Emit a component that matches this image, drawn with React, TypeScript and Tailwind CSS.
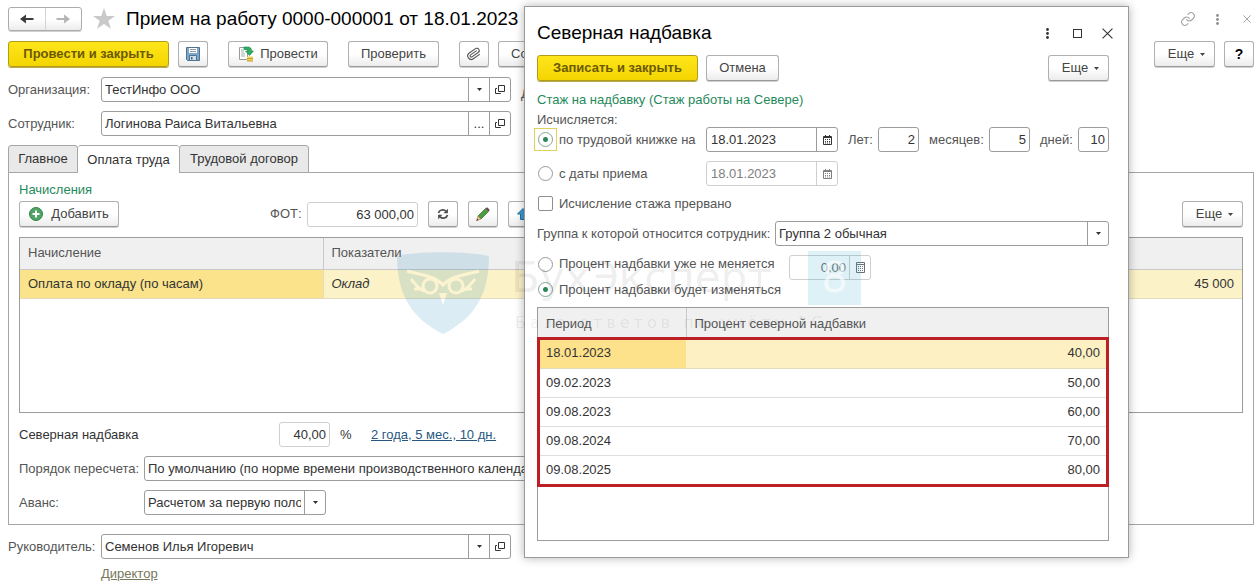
import type { ReactNode } from "react";

const periods = [
  { date: "18.01.2023", percent: "40,00" },
  { date: "09.02.2023", percent: "50,00" },
  { date: "09.08.2023", percent: "60,00" },
  { date: "09.08.2024", percent: "70,00" },
  { date: "09.08.2025", percent: "80,00" },
];

/* ---------- icons ---------- */

function ArrowIcon({ flip = false }: { flip?: boolean }) {
  return (
    <svg className={flip ? "w-4 h-3 rotate-180 text-[#b4b4b4]" : "w-4 h-3 text-[#3a3a3a]"} viewBox="0 0 16 12" aria-hidden="true">
      <path d="M2 6h12.500" stroke="currentColor" strokeWidth={2} fill="none" />
      <path d="M1 6l6-4.500v3L5 6l2 1.500v3z" fill="currentColor" />
    </svg>
  );
}

function StarIcon() {
  return (
    <svg className="w-6 h-6 text-[#c9c9c9]" viewBox="0 0 24 24" fill="currentColor" aria-hidden="true">
      <path d="M12 1l2.700 7.900H23l-6.700 4.900 2.600 8L12 16.900 5.100 21.800l2.600-8L1 8.900h8.300z" />
    </svg>
  );
}

function CaretIcon() {
  return (
    <svg className="w-[5px] h-[3px] shrink-0" viewBox="0 0 5 3" fill="currentColor" aria-hidden="true">
      <path d="M0 0h5L2.500 3z" />
    </svg>
  );
}

function OpenIcon() {
  return (
    <svg className="w-[10px] h-[10px]" viewBox="0 0 10 10" fill="none" stroke="currentColor" aria-hidden="true">
      <path d="M3.500.5h6v6h-6z" />
      <path d="M2 3.500H.5v5h5V8" />
    </svg>
  );
}

function CalendarIcon() {
  return (
    <svg className="w-[9px] h-[10px]" viewBox="0 0 9 10" fill="none" stroke="currentColor" aria-hidden="true">
      <path d="M.5 1.500h8v8h-8z" />
      <path d="M1 2.500h7M2.500 0v2M6.500 0v2" />
      <path d="M2 4.500h5M2 6.500h5M2 8h5" strokeDasharray="1 1" />
    </svg>
  );
}

function CalcIcon() {
  return (
    <svg className="w-[9px] h-[11px]" viewBox="0 0 9 11" fill="none" stroke="currentColor" aria-hidden="true">
      <path d="M.5.500h8v10h-8zM1 2.500h7" />
      <path d="M2 4.500h5M2 6.500h5M2 8.500h5" strokeDasharray="1 1" />
    </svg>
  );
}

function FloppyIcon() {
  return (
    <svg className="w-[14px] h-[14px]" viewBox="0 0 14 14" aria-hidden="true">
      <path d="M.5.500h13v13h-12l-1-1z" fill="#7da7c9" stroke="#4d7391" />
      <path d="M3 1h8v5H3z" fill="#fff" />
      <path d="M4 2.500h6M4 4.500h6" stroke="#8d9aa5" />
      <path d="M3.500 8.500h7v5h-7z" fill="#d5dde4" stroke="#4d7391" />
      <path d="M5 10h1.500v2.500H5z" fill="#3f6688" />
    </svg>
  );
}

function PostIcon() {
  return (
    <svg className="w-4 h-4" viewBox="0 0 16 16" aria-hidden="true">
      <path d="M1.500 1.500h8v12h-8z" fill="#fff" stroke="#9a9a9a" />
      <path d="M3 4h3M3 6h3M3 8h4M3 10h4" stroke="#9db6a6" />
      <path d="M6 1h4c2.500 0 3.500 1.500 3.500 4H15.500l-4 4.500L7.500 5h3c0-1-.5-1.500-1.500-1.500H6z" fill="#2fae62" stroke="#13833f" strokeWidth={0.6} />
      <path d="M9 10.500h6v4.500H9z" fill="#f0d25c" />
      <path d="M9 12.500h6M9 15h6" stroke="#c29a2e" />
    </svg>
  );
}

function ClipIcon() {
  return (
    <svg className="w-[14px] h-[14px] rotate-[10deg]" viewBox="0 0 24 24" fill="none" stroke="#555" strokeWidth={1.9} strokeLinecap="round" aria-hidden="true">
      <path d="M21.400 11l-9.200 9.200a6 6 0 0 1-8.500-8.500l9.200-9.200a4 4 0 0 1 5.700 5.700l-9.200 9.200a2 2 0 0 1-2.900-2.900l8.500-8.400" />
    </svg>
  );
}

function PlusIcon() {
  return (
    <svg className="w-[14px] h-[14px]" viewBox="0 0 14 14" aria-hidden="true">
      <circle cx="7" cy="7" r="6.500" fill="#4fa565" stroke="#35814b" />
      <path d="M7 3.500v7M3.500 7h7" stroke="#fff" strokeWidth={2} />
    </svg>
  );
}

function RefreshIcon() {
  return (
    <svg className="w-3 h-3" viewBox="0 0 12 12" fill="none" stroke="#4d4d4d" strokeWidth={1.7} aria-hidden="true">
      <path d="M1.500 5C2.300 1.800 6.500.900 9 3.200M10.500 7C9.700 10.200 5.500 11.100 3 8.800" />
      <path d="M10.900.8v4.400H6.500zM1.100 11.200V6.800h4.400z" fill="#4d4d4d" stroke="none" />
    </svg>
  );
}

function PencilIcon() {
  return (
    <svg className="w-[14px] h-[14px]" viewBox="0 0 14 14" aria-hidden="true">
      <path d="M9.500 1.500L12.500 4.500 5 12 2 9z" fill="#4f9a45" stroke="#2f6c2c" strokeWidth={0.7} />
      <path d="M9.500 1.300L11 .2l2.800 2.600-1.200 1.700z" fill="#6e4a52" />
      <path d="M2 9l3 3-4.500 1.700z" fill="#e8c68a" stroke="#8a6a35" strokeWidth={0.5} />
      <path d="M.5 13.700l.8-2 1.200 1.200z" fill="#333" />
    </svg>
  );
}

function UpIcon() {
  return (
    <svg className="w-3 h-3" viewBox="0 0 12 12" aria-hidden="true">
      <path d="M6 .5L11.500 6H8.500v5.500h-5V6H.5z" fill="#3d9ad0" stroke="#22719f" />
    </svg>
  );
}

function LinkIcon() {
  return (
    <svg className="w-4 h-4" viewBox="0 0 24 24" fill="none" stroke="#a0a0a0" strokeWidth={1.6} strokeLinecap="round" aria-hidden="true">
      <path d="M10 13a5 5 0 0 0 7.500.5l3-3a5 5 0 0 0-7-7L12 5" />
      <path d="M14 11a5 5 0 0 0-7.500-.5l-3 3a5 5 0 0 0 7 7L12 19" />
    </svg>
  );
}

function DotsIcon() {
  return (
    <svg className="w-[3px] h-[11px]" viewBox="0 0 3 11" fill="currentColor" aria-hidden="true">
      <circle cx="1.500" cy="1.500" r="1.400" />
      <circle cx="1.500" cy="5.500" r="1.400" />
      <circle cx="1.500" cy="9.500" r="1.400" />
    </svg>
  );
}

function CrossIcon({ className }: { className: string }) {
  return (
    <svg className={className} viewBox="0 0 10 10" fill="none" stroke="currentColor" aria-hidden="true">
      <path d="M.5.500l9 9M9.500.500l-9 9" />
    </svg>
  );
}

/* ---------- controls ---------- */

function Button({ children, className = "", label }: { children: ReactNode; className?: string; label?: string }) {
  return (
    <button
      type="button"
      aria-label={label}
      className={`flex h-[26px] shrink-0 items-center justify-center rounded-[3px] border border-[#b0b0b0] border-b-[#999] bg-linear-to-b from-white from-50% to-[#ececec] whitespace-nowrap text-[#444] shadow-[0_1px_0_#d0d0d0] ${className}`}
    >
      {children}
    </button>
  );
}

function PrimaryButton({ children }: { children: ReactNode }) {
  return (
    <button
      type="button"
      className="h-[26px] w-[161px] shrink-0 rounded-[3px] border border-[#b39b1c] bg-linear-to-b from-[#ffe619] to-[#f3d500] font-bold whitespace-nowrap text-[#6b5900] shadow-[0_1px_0_#b9a94a]"
    >
      {children}
    </button>
  );
}

function MoreButton() {
  return (
    <Button className="w-[61px] gap-[6px] pl-1">
      Еще
      <CaretIcon />
    </Button>
  );
}

function FieldButton({ label, children }: { label: string; children: ReactNode }) {
  return (
    <button type="button" aria-label={label} className="flex w-[21px] shrink-0 items-center justify-center border-l border-inherit">
      {children}
    </button>
  );
}

function ComboField({ id, label, value, pick }: { id: string; label: string; value: string; pick: ReactNode }) {
  return (
    <div className="flex items-center">
      <label htmlFor={id} className="w-[93px] shrink-0 whitespace-nowrap text-[#555]">
        {label}
      </label>
      <div className="flex h-[25px] w-[410px] rounded-[3px] border border-[#9c9c9c] bg-white">
        <input id={id} defaultValue={value} className="min-w-0 flex-1 px-[3px] outline-none" />
        <FieldButton label="Выбрать">{pick}</FieldButton>
        <FieldButton label="Открыть">
          <OpenIcon />
        </FieldButton>
      </div>
    </div>
  );
}

function SelectField({ id, value, className }: { id: string; value: string; className: string }) {
  return (
    <div className={`flex h-[25px] rounded-[3px] border border-[#9c9c9c] bg-white ${className}`}>
      <select id={id} className="min-w-0 flex-1 appearance-none overflow-hidden px-[3px] outline-none">
        <option>{value}</option>
      </select>
      <span className="pointer-events-none flex w-[21px] shrink-0 items-center justify-center border-l border-inherit">
        <CaretIcon />
      </span>
    </div>
  );
}

function DateField({ label, value, disabled = false }: { label: string; value: string; disabled?: boolean }) {
  return (
    <div className={`flex h-[25px] w-[132px] shrink-0 rounded-[3px] border bg-white ${disabled ? "border-[#cfcfcf] text-[#808080]" : "border-[#9c9c9c]"}`}>
      <input aria-label={label} defaultValue={value} disabled={disabled} className="min-w-0 flex-1 px-1 outline-none" />
      <FieldButton label="Календарь">
        <CalendarIcon />
      </FieldButton>
    </div>
  );
}

function NumberField({ id, label, value, labelWidth, width }: { id: string; label: string; value: string; labelWidth: string; width: string }) {
  return (
    <>
      <label htmlFor={id} className={`ml-[10px] shrink-0 whitespace-nowrap text-[#555] ${labelWidth}`}>
        {label}
      </label>
      <input id={id} defaultValue={value} className={`h-[25px] shrink-0 rounded-[3px] border border-[#9c9c9c] bg-white px-[3px] text-right outline-none ${width}`} />
    </>
  );
}

function Radio({ id, name, checked = false }: { id: string; name: string; checked?: boolean }) {
  return (
    <input
      id={id}
      type="radio"
      name={name}
      defaultChecked={checked}
      className="h-[15px] w-[15px] shrink-0 appearance-none rounded-full border border-[#999] bg-white checked:border-[#7fa893] checked:bg-[radial-gradient(circle,#2b8658_2px,#fff_3px)]"
    />
  );
}

/* ---------- document form ---------- */

function DocumentForm() {
  return (
    <main className="min-w-[1100px] pt-[7px] pr-[5px] pl-2">
      <div className="flex h-6 items-center">
        <div className="flex h-6 w-[74px] shrink-0 rounded-[3px] border border-[#ababab] bg-linear-to-b from-white from-50% to-[#ececec] shadow-[0_1px_0_#d0d0d0]">
          <button type="button" aria-label="Назад" className="flex flex-1 items-center justify-center border-r border-[#d4d4d4]">
            <ArrowIcon />
          </button>
          <button type="button" aria-label="Вперед" className="flex flex-1 items-center justify-center">
            <ArrowIcon flip />
          </button>
        </div>
        <button type="button" aria-label="В избранное" className="mx-[10px]">
          <StarIcon />
        </button>
        <h1 className="text-[19px] whitespace-nowrap text-black">Прием на работу 0000-000001 от 18.01.2023</h1>
        <div className="ml-auto flex items-center gap-5 pr-[3px] text-[#8e8e8e]">
          <button type="button" aria-label="Ссылка">
            <LinkIcon />
          </button>
          <button type="button" aria-label="Меню">
            <DotsIcon />
          </button>
          <button type="button" aria-label="Закрыть документ" className="ml-1">
            <CrossIcon className="h-2 w-2" />
          </button>
        </div>
      </div>

      <div className="mt-[10px] flex">
        <PrimaryButton>Провести и закрыть</PrimaryButton>
        <Button label="Записать" className="ml-[9px] w-[30px]">
          <FloppyIcon />
        </Button>
        <Button className="ml-5 w-[100px] gap-[6px]">
          <PostIcon />
          Провести
        </Button>
        <Button className="ml-5 w-[91px]">Проверить</Button>
        <Button label="Файлы" className="ml-5 w-[30px]">
          <ClipIcon />
        </Button>
        <Button className="ml-[9px] px-3">Создать на основании</Button>
        <div className="ml-auto flex gap-[9px]">
          <MoreButton />
          <Button className="w-[30px] text-sm font-bold text-black">?</Button>
        </div>
      </div>

      <div className="mt-[10px] flex flex-col gap-[9px]">
        <div className="flex items-center">
          <ComboField id="org" label="Организация:" value="ТестИнфо ООО" pick={<CaretIcon />} />
          <span className="mt-2 ml-[10px] text-[#555]">Дата:</span>
        </div>
        <ComboField id="employee" label="Сотрудник:" value="Логинова Раиса Витальевна" pick="..." />
      </div>

      <div role="tablist" className="mt-[9px] flex h-7">
        <button type="button" role="tab" aria-selected="false" className="w-[70px] rounded-t-[3px] border border-[#a6a6a6] bg-[#e9e9e9]">
          Главное
        </button>
        <button type="button" role="tab" aria-selected="true" className="z-1 w-[101px] rounded-t-[3px] border-t border-[#a6a6a6] bg-white">
          Оплата труда
        </button>
        <button type="button" role="tab" aria-selected="false" className="w-[130px] rounded-t-[3px] border border-[#a6a6a6] bg-[#e9e9e9]">
          Трудовой договор
        </button>
      </div>

      <section className="-mt-px border border-[#a6a6a6] px-[10px] pt-2 pb-[9px]">
        <h2 className="leading-[18px] text-[#1f8a5a]">Начисления</h2>
        <div className="mt-[2px] flex items-center">
          <Button className="w-[100px] gap-2">
            <PlusIcon />
            Добавить
          </Button>
          <label htmlFor="fot" className="ml-[151px] w-[37px] text-[#555]">
            ФОТ:
          </label>
          <input id="fot" defaultValue="63 000,00" className="h-[25px] w-[111px] rounded-[3px] border border-[#cfcfcf] px-[3px] text-right outline-none" />
          <div className="ml-[10px] flex gap-[10px]">
            <Button label="Обновить" className="w-[30px]">
              <RefreshIcon />
            </Button>
            <Button label="Изменить" className="w-[30px]">
              <PencilIcon />
            </Button>
            <Button label="Вверх" className="w-[30px]">
              <UpIcon />
            </Button>
          </div>
          <div className="ml-auto">
            <MoreButton />
          </div>
        </div>

        <div className="mt-[10px] h-[176px] border border-[#9c9c9c]">
          <table className="w-full table-fixed border-collapse text-left">
            <thead>
              <tr className="h-[31px] border-b border-[#c9c9c9] bg-[#f0f0f0] text-[#555]">
                <th className="w-[303px] border-r border-[#c9c9c9] px-2 font-normal">Начисление</th>
                <th className="px-2 font-normal">Показатели</th>
                <th className="w-[120px]" aria-label="Значение" />
              </tr>
            </thead>
            <tbody>
              <tr className="h-[29px] border-b border-[#e3dcc0] bg-[#fcf2c8]">
                <td className="border-r border-[#e3dcc0] bg-[#fbe38b] px-2">Оплата по окладу (по часам)</td>
                <td className="px-2 italic">Оклад</td>
                <td className="px-2 text-right">45 000</td>
              </tr>
            </tbody>
          </table>
        </div>

        <div className="mt-[9px] flex flex-col gap-[9px]">
          <div className="flex items-center">
            <label htmlFor="north" className="w-[260px]">
              Северная надбавка
            </label>
            <input id="north" defaultValue="40,00" className="h-[25px] w-[51px] rounded-[3px] border border-[#cfcfcf] px-[3px] text-right outline-none" />
            <span className="ml-[10px] w-[31px]">%</span>
            <a href="#stage" className="text-[#28587f] underline">
              2 года, 5 мес., 10 дн.
            </a>
          </div>
          <div className="flex items-center">
            <label htmlFor="recalc" className="w-[125px] shrink-0 whitespace-nowrap text-[#555]">
              Порядок пересчета:
            </label>
            <SelectField id="recalc" value="По умолчанию (по норме времени производственного календаря)" className="w-[600px]" />
          </div>
          <div className="flex items-center">
            <label htmlFor="advance" className="w-[125px] shrink-0 text-[#555]">
              Аванс:
            </label>
            <SelectField id="advance" value="Расчетом за первую половину месяца" className="w-[182px]" />
          </div>
        </div>
      </section>

      <div className="mt-[9px]">
        <ComboField id="head" label="Руководитель:" value="Семенов Илья Игоревич" pick={<CaretIcon />} />
        <a href="#position" className="mt-[5px] ml-[93px] inline-block leading-5 text-[#77775a] underline">
          Директор
        </a>
      </div>
    </main>
  );
}

/* ---------- northern allowance window ---------- */

function AllowanceDialog() {
  return (
    <div
      role="dialog"
      aria-labelledby="dialog-title"
      className="absolute top-[6px] left-[524px] z-10 w-[605px] border border-[#9a9a9a] bg-white px-3 pt-[14px] pb-4 shadow-[0_0_9px_rgba(0,0,0,0.3)]"
    >
      <div className="flex h-6 items-center pr-[2px]">
        <h2 id="dialog-title" className="text-[19px] text-black">
          Северная надбавка
        </h2>
        <div className="ml-auto flex items-center gap-5 pr-[1px]">
          <button type="button" aria-label="Меню окна" className="mr-1">
            <DotsIcon />
          </button>
          <button type="button" aria-label="Развернуть" className="h-[9px] w-[9px] border border-[#333]" />
          <button type="button" aria-label="Закрыть">
            <CrossIcon className="h-[11px] w-[11px]" />
          </button>
        </div>
      </div>

      <div className="mt-[10px] flex gap-2 pr-[7px]">
        <PrimaryButton>Записать и закрыть</PrimaryButton>
        <Button className="w-[73px]">Отмена</Button>
        <div className="ml-auto">
          <MoreButton />
        </div>
      </div>

      <h3 className="mt-[9px] leading-5 text-[#1f8a5a]">Стаж на надбавку (Стаж работы на Севере)</h3>
      <p className="h-[17px] leading-5 text-[#555]">Исчисляется:</p>

      <div className="flex items-center">
        <span className="-ml-[3px] flex h-[23px] w-[23px] shrink-0 items-center justify-center border border-[#dfd25a]">
          <Radio id="by-book" name="start" checked />
        </span>
        <label htmlFor="by-book" className="ml-[2px] w-[147px] shrink-0 whitespace-nowrap text-[#555]">
          по трудовой книжке на
        </label>
        <DateField label="Дата трудовой книжки" value="18.01.2023" />
        <NumberField id="years" label="Лет:" value="2" labelWidth="w-[30px]" width="w-[41px]" />
        <NumberField id="months" label="месяцев:" value="5" labelWidth="w-[60px]" width="w-[41px]" />
        <NumberField id="days" label="дней:" value="10" labelWidth="w-[38px]" width="w-[31px]" />
      </div>

      <div className="mt-[9px] flex items-center pl-px">
        <Radio id="by-hire" name="start" />
        <label htmlFor="by-hire" className="ml-[6px] w-[147px] text-[#555]">
          с даты приема
        </label>
        <DateField label="Дата приема" value="18.01.2023" disabled />
      </div>

      <div className="mt-[9px] flex h-[17px] items-center pl-px">
        <input id="broken" type="checkbox" className="h-[15px] w-[15px] appearance-none rounded-[2px] border border-[#8f8f8f] bg-white" />
        <label htmlFor="broken" className="ml-[6px] text-[#555]">
          Исчисление стажа прервано
        </label>
      </div>

      <div className="mt-[9px] flex items-center pr-[7px]">
        <label htmlFor="group" className="w-[238px] shrink-0 whitespace-nowrap text-[#555]">
          Группа к которой относится сотрудник:
        </label>
        <SelectField id="group" value="Группа 2 обычная" className="flex-1" />
      </div>

      <div className="mt-[9px] flex h-[26px] pl-px">
        <div className="flex h-[18px] items-center">
          <Radio id="fixed" name="mode" />
          <label htmlFor="fixed" className="ml-[6px] w-[230px] text-[#555]">
            Процент надбавки уже не меняется
          </label>
        </div>
        <div className="flex h-[25px] w-[82px] rounded-[3px] border border-[#cfcfcf] text-[#707070]">
          <input aria-label="Процент" disabled defaultValue="0,00" className="min-w-0 flex-1 px-[3px] text-right" />
          <FieldButton label="Калькулятор">
            <CalcIcon />
          </FieldButton>
        </div>
      </div>
      <div className="flex h-[17px] items-center pl-px">
        <Radio id="changing" name="mode" checked />
        <label htmlFor="changing" className="ml-[6px] text-[#555]">
          Процент надбавки будет изменяться
        </label>
      </div>

      <div className="relative mt-[9px] mr-[7px] h-[234px] border border-[#9c9c9c]">
        <table className="w-full table-fixed border-collapse text-left">
          <thead>
            <tr className="h-[31px] bg-[#f0f0f0] text-[#555]">
              <th className="w-[148px] border-r border-[#c9c9c9] px-2 font-normal">Период</th>
              <th className="px-2 font-normal">Процент северной надбавки</th>
            </tr>
          </thead>
          <tbody>
            {periods.map((row, i) => (
              <tr key={row.date} className={i === 0 ? "h-[29px] border-b border-[#e3dcc0] bg-[#fdf1c4]" : "h-[29px] border-b border-[#dedede]"}>
                <td className={i === 0 ? "bg-[#fde18b] px-2" : "px-2"}>{row.date}</td>
                <td className="px-2 text-right">{row.percent}</td>
              </tr>
            ))}
          </tbody>
        </table>
        {/* red frame around the rows */}
        <div className="pointer-events-none absolute -inset-x-px top-[29px] h-[150px] border-3 border-[#bd1f27]" />
      </div>
    </div>
  );
}

/* ---------- watermark ---------- */

function Watermark() {
  return (
    <div className="pointer-events-none absolute top-[251px] left-[397px] z-20 flex font-['DejaVu_Sans','Liberation_Sans',sans-serif] select-none" aria-hidden="true">
      <svg className="h-[84px] w-[92px] opacity-15" viewBox="0 0 92 84">
        <path d="M0 5C20 0 70 0 92 5c0 38-14 62-46 78C14 67 0 43 0 5z" fill="#1a86b8" />
        <g fill="none" stroke="#fff" strokeWidth={3}>
          <circle cx="33" cy="35" r="7" />
          <circle cx="59" cy="35" r="7" />
          <path d="M10 20c12 4 27 4 36 14 9-10 24-10 36-14M14 28c5 6 7 10 13 12M78 28c-5 6-7 10-13 12M17 38h8M75 38h-8" />
        </g>
        <path d="M46 54l-4-12h8z" fill="#fff" />
      </svg>
      <div className="ml-[22px]">
        <div className="flex h-[54px] items-center">
          <span className="w-[297px] text-[42px] leading-[54px] text-black/8">БухЭксперт</span>
          <span className="flex h-[54px] w-[53px] items-center justify-center bg-[#1aa0c8]/15 text-[42px] text-white/60">8</span>
        </div>
        <div className="mt-2 ml-1 text-base leading-5 tracking-[4px] whitespace-nowrap text-black/8">База ответов по учёту 1С</div>
      </div>
    </div>
  );
}

export default function App() {
  return (
    <div className="relative min-h-screen overflow-hidden bg-white font-['Liberation_Sans',Arial,sans-serif] text-[13px] leading-4 text-[#333]">
      <DocumentForm />
      <AllowanceDialog />
      <Watermark />
    </div>
  );
}
